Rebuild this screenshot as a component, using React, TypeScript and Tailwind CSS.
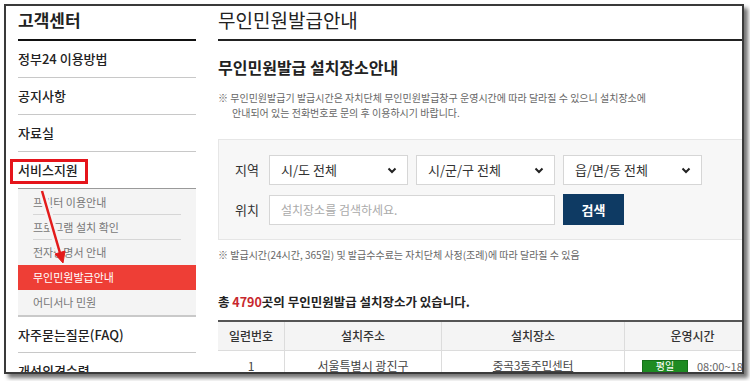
const KR = "font-['Noto_Sans_CJK_KR','Noto_Sans',sans-serif]";

function Chevron() {
  return (
    <svg width="10" height="7" viewBox="0 0 10 7" className="shrink-0">
      <polyline points="1.5,1.5 5,5 8.5,1.5" fill="none" stroke="#222" strokeWidth="2" />
    </svg>
  );
}

function SelectBox({ label }: { label: string }) {
  return (
    <div className="w-[139px] h-[30px] bg-white border border-[#d6d6d6] flex items-center justify-between pl-[11px] pr-[10px] text-[13px] text-[#333]">
      <span>{label}</span>
      <Chevron />
    </div>
  );
}

function Sidebar() {
  const mainItems = ["정부24 이용방법", "공지사항", "자료실"];
  return (
    <aside className="w-[190px] shrink-0 pl-[12px]">
      <div className="h-[35px] border-b-2 border-[#111] text-[17px] font-bold leading-[28px] text-[#222]">
        고객센터
      </div>
      {mainItems.map((t) => (
        <div key={t} className="h-[37px] border-b border-[#c8c8c8] flex items-center text-[13px] font-medium text-[#222]">
          {t}
        </div>
      ))}
      <div className="h-[37px] border-b border-[#9a9a9a] flex items-center text-[13px] font-medium text-[#222]">
        서비스지원
      </div>
      <div className="bg-[#f4f4f4] border-b-2 border-[#c9c9c9] pt-[1px]">
        <div className="mx-[15px] h-[25px] border-b border-[#d6d6d6] flex items-center text-[11px] text-[#777]">프린터 이용안내</div>
        <div className="mx-[15px] h-[25px] border-b border-[#d6d6d6] flex items-center text-[11px] text-[#777]">프로그램 설치 확인</div>
        <div className="mx-[15px] h-[25px] flex items-center text-[11px] text-[#777]">전자증명서 안내</div>
        <div className="h-[25px] bg-[#ee3e36] flex items-center pl-[15px] text-[11px] text-white">무인민원발급안내</div>
        <div className="mx-[15px] h-[25px] flex items-center text-[11px] text-[#777]">어디서나 민원</div>
      </div>
      <div className="h-[36px] border-b border-[#c8c8c8] flex items-center text-[13px] font-medium text-[#222]">
        자주묻는질문(FAQ)
      </div>
      <div className="h-[36px] flex items-center text-[13px] font-medium text-[#222]">개선의견수렴</div>
    </aside>
  );
}

function Main() {
  return (
    <main className="flex-1 min-w-0 pl-[22px]">
      <div className="h-[35px] border-b-2 border-[#222] text-[19px] leading-[28px] text-[#222]">
        무인민원발급안내
      </div>
      <h2 className="mt-[15px] text-[16px] font-bold leading-[22px] text-[#222]">무인민원발급 설치장소안내</h2>
      <div className="mt-[12px] text-[10px] leading-[15px] text-[#666]">
        <p>※ 무인민원발급기 발급시간은 자치단체 무인민원발급창구 운영시간에 따라 달라질 수 있으니 설치장소에</p>
        <p className="pl-[14px]">안내되어 있는 전화번호로 문의 후 이용하시기 바랍니다.</p>
      </div>

      <div className="mt-[19px] h-[101px] bg-[#f7f7f7] border border-r-0 border-[#e6e6e6] pt-[15px]">
        <div className="flex items-center">
          <span className="w-[50px] pl-[16px] text-[13px] text-[#333]">지역</span>
          <div className="flex gap-[8px]">
            <SelectBox label="시/도 전체" />
            <SelectBox label="시/군/구 전체" />
            <SelectBox label="읍/면/동 전체" />
          </div>
        </div>
        <div className="flex items-center mt-[9px]">
          <span className="w-[50px] pl-[16px] text-[13px] text-[#333]">위치</span>
          <div className="w-[286px] h-[30px] bg-white border border-[#d6d6d6] flex items-center pl-[11px] text-[12px] text-[#aaa]">
            설치장소를 검색하세요.
          </div>
          <button className="ml-[8px] w-[61px] h-[31px] bg-[#0e3a63] text-white text-[13px] font-bold">검색</button>
        </div>
      </div>

      <p className="mt-[7px] text-[10px] leading-[15px] text-[#666]">
        ※ 발급시간(24시간, 365일) 및 발급수수료는 자치단체 사정(조례)에 따라 달라질 수 있음
      </p>

      <p className="mt-[29px] text-[12.5px] font-bold leading-[22px] text-[#222]">
        총 <span className="text-[#c8282e]">4790</span>곳의 무인민원발급 설치장소가 있습니다.
      </p>

      <div className="mt-[7px] w-[542px] border-t-2 border-[#555]">
        <div className="grid grid-cols-[67px_157px_183px_135px] h-[29px] bg-[#f4f4f4] border-b border-[#dcdcdc] text-[12px] font-medium text-[#333]">
          <div className="flex items-center justify-center border-r border-[#dcdcdc]">일련번호</div>
          <div className="flex items-center justify-center border-r border-[#dcdcdc]">설치주소</div>
          <div className="flex items-center justify-center border-r border-[#dcdcdc]">설치장소</div>
          <div className="flex items-center justify-center">운영시간</div>
        </div>
        <div className="grid grid-cols-[67px_157px_183px_135px] h-[30px] text-[12px] text-[#444]">
          <div className="flex items-center justify-center border-r border-[#dcdcdc]">1</div>
          <div className="flex items-center justify-center border-r border-[#dcdcdc]">서울특별시 광진구</div>
          <div className="flex items-center justify-center border-r border-[#dcdcdc] text-[11.5px] underline">중곡3동주민센터</div>
          <div className="flex items-center pl-[17px]">
            <span className="w-[46px] h-[13px] bg-[#1e8b22] border border-[#16701a] text-white text-[10px] leading-none flex items-center justify-center">
              평일
            </span>
            <span className="ml-[9px] text-[11px] text-[#666] whitespace-nowrap">08:00~18:00</span>
          </div>
        </div>
      </div>
    </main>
  );
}

export default function App() {
  return (
    <div className={`relative w-[750px] h-[381px] bg-white overflow-hidden ${KR}`}>
      <div className="ml-[4px] mt-[4px] w-[740px] h-[370px] border-2 border-[#3a3a3a] bg-white overflow-hidden flex shadow-[4px_4px_4px_rgba(0,0,0,0.55)]">
        <Sidebar />
        <Main />
      </div>

      {/* red highlight box */}
      <div className="absolute left-[10px] top-[159px] w-[78px] h-[25px] border-[3px] border-[#e5141b]" />

      {/* red arrow */}
      <svg className="absolute left-0 top-0 pointer-events-none" width="750" height="381">
        <line x1="42" y1="191" x2="60" y2="253" stroke="#f4f4f4" strokeWidth="8" />
        <line x1="42" y1="191" x2="60" y2="253" stroke="#e31b1b" strokeWidth="2.5" />
        <polygon points="63,263 65,251 55,254" fill="#e31b1b" stroke="#e31b1b" strokeWidth="1" />
      </svg>
    </div>
  );
}
